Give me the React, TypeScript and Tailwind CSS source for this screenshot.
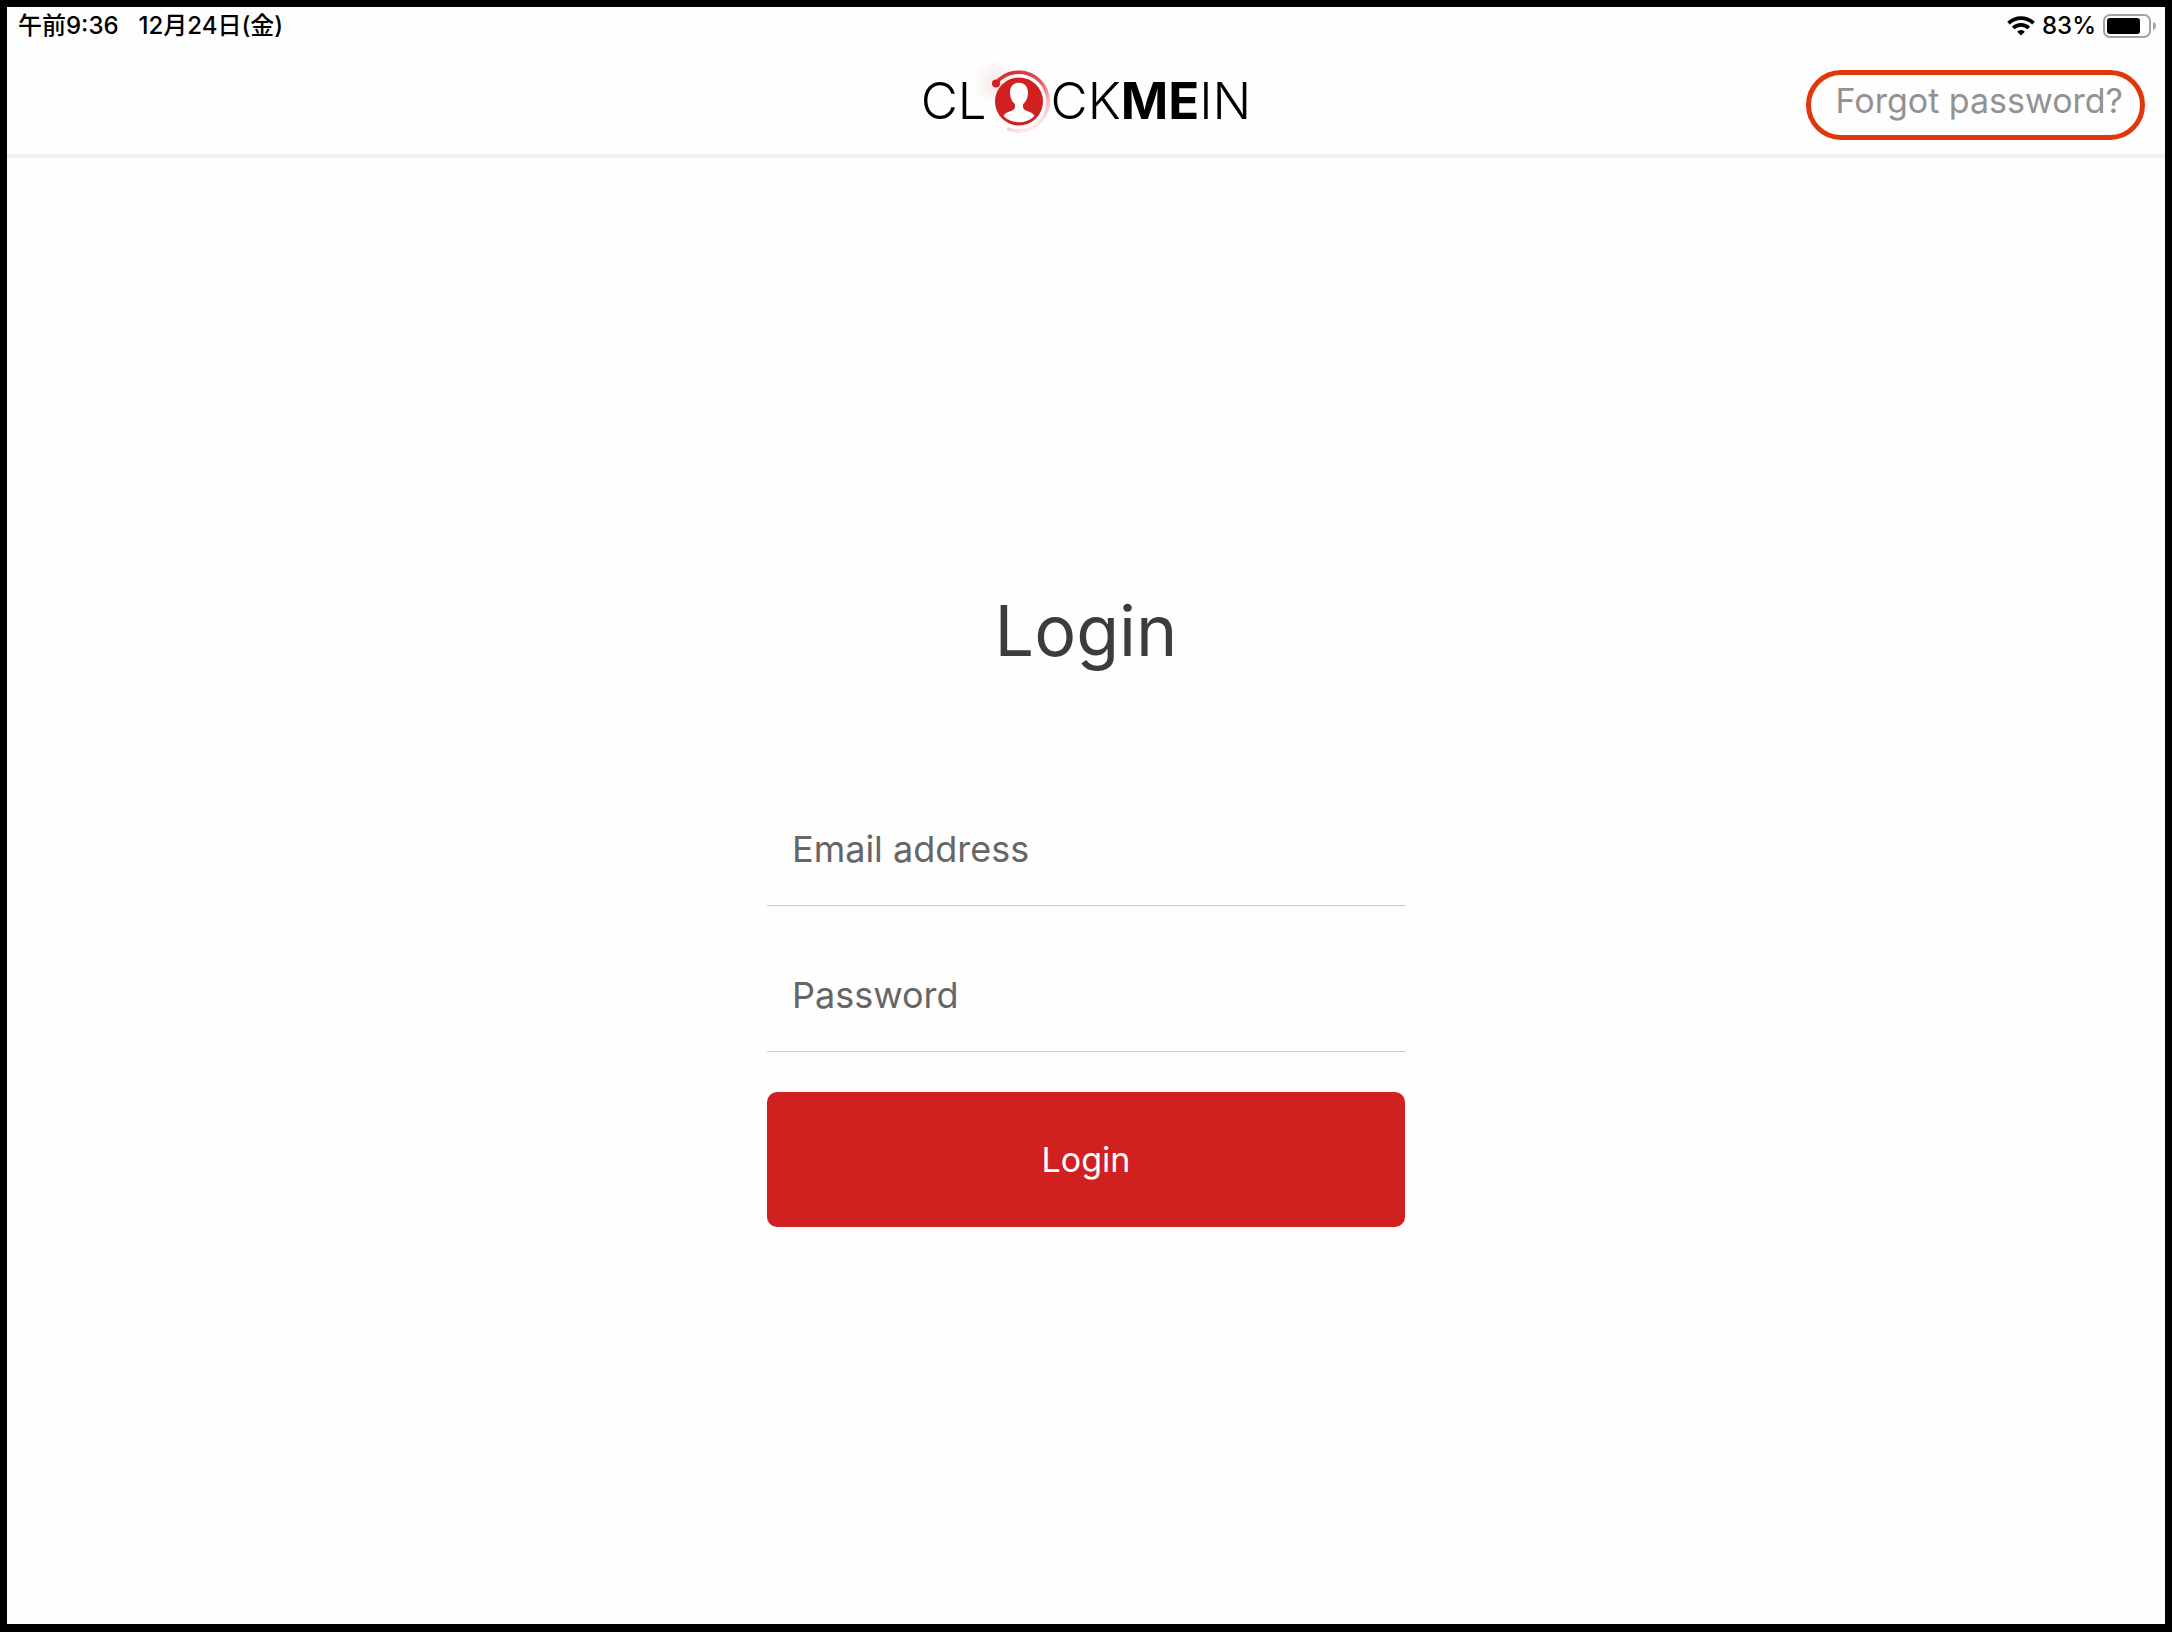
import { useState } from 'react';

const FONT = "font-['Inter','Noto_Sans_CJK_JP',sans-serif]";

function WifiIcon() {
  return (
    <svg width="28" height="20" viewBox="0 0 28 20" fill="none" aria-hidden="true">
      <path d="M1.5 7.2a18 18 0 0 1 25 0" stroke="#000" strokeWidth="3.8" />
      <path d="M6.2 12a11.2 11.2 0 0 1 15.600 0" stroke="#000" strokeWidth="3.8" />
      <path d="M14 19.6l-3.9-3.900a5.600 5.600 0 0 1 7.800 0z" fill="#000" />
    </svg>
  );
}

function BatteryIcon() {
  return (
    <svg width="54" height="24" viewBox="0 0 54 24" fill="none" aria-hidden="true">
      <rect x="1" y="1" width="46" height="22" rx="6" stroke="#a3a3a3" strokeWidth="2" />
      <rect x="4" y="4" width="33" height="16" rx="3" fill="#000" />
      <path d="M50 8c4 1 4 7 0 8z" fill="#a3a3a3" />
    </svg>
  );
}

// The "O" of the wordmark: a person inside a clock ring
function LogoMark() {
  return (
    <svg width="64" height="64" viewBox="0 0 64 64" fill="none" className="overflow-visible" aria-hidden="true">
      <defs>
        <radialGradient id="glow">
          <stop offset="0" stopColor="#d02020" stopOpacity="0.1" />
          <stop offset="1" stopColor="#d02020" stopOpacity="0" />
        </radialGradient>
        <linearGradient id="ring" x1="12" y1="6" x2="38" y2="62" gradientUnits="userSpaceOnUse">
          <stop offset="0" stopColor="#d32a2d" />
          <stop offset="0.35" stopColor="#e2575c" />
          <stop offset="0.7" stopColor="#f7b3b8" />
          <stop offset="1" stopColor="#fdeaec" />
        </linearGradient>
      </defs>
      <circle cx="9" cy="14" r="24" fill="url(#glow)" />
      <path d="M9 14A29.4 29.4 0 1 1 20 59.6" stroke="url(#ring)" strokeWidth="3.6" />
      <circle cx="9" cy="14.5" r="4" fill="#d02020" />
      <circle cx="32" cy="32.5" r="24" fill="#d02020" />
      <path
        d="M32 13.8c-5.6 0-9 4-9 9.7 0 4.9 1.9 9.2 4.8 11.5.8 4-.3 5.5-3.3 6.8-3.8 1.5-6.4 2.2-8 5.2 4.2 4.3 9.5 6.3 15.5 6.3s11.3-2 15.5-6.3c-1.6-3-4.2-3.7-8-5.2-3-1.3-4.1-2.8-3.3-6.8 2.9-2.3 4.8-6.6 4.8-11.5 0-5.7-3.4-9.7-9-9.7z"
        fill="#fff"
      />
    </svg>
  );
}

function Logo() {
  return (
    <div className="flex items-center text-[51px] leading-[64px] text-black" aria-label="ClockMeIn">
      <span className="font-light">CL</span>
      <LogoMark />
      <span className="font-light">CK</span>
      <span className="font-bold">ME</span>
      <span className="font-light">IN</span>
    </div>
  );
}

function StatusBar() {
  return (
    <div className="flex h-[38px] items-center justify-between pl-[11px] pr-2 text-[24px] font-medium leading-[38px] text-black">
      <div className="flex gap-5">
        <span>午前9:36</span>
        <span>12月24日(金)</span>
      </div>
      <div className="flex items-center gap-[7px]">
        <WifiIcon />
        <span>83%</span>
        <BatteryIcon />
      </div>
    </div>
  );
}

interface FieldProps {
  id: string;
  type: string;
  label: string;
  value: string;
  onChange: (value: string) => void;
}

function Field({ id, type, label, value, onChange }: FieldProps) {
  return (
    <input
      id={id}
      type={type}
      value={value}
      aria-label={label}
      placeholder={label}
      onChange={(e) => onChange(e.target.value)}
      className="block h-[114px] w-full border-b border-[#cccccc] bg-transparent px-[25px] text-[36px] text-[#3a3a3a] outline-none placeholder:text-[#666666]"
    />
  );
}

export default function App() {
  const [email, setEmail] = useState('');
  const [password, setPassword] = useState('');

  return (
    <div className={`flex min-h-screen flex-col border-[7px] border-b-8 border-black bg-[#fefefe] ${FONT}`}>
      <StatusBar />

      <header className="grid grid-cols-[1fr_auto_1fr] items-start border-b-4 border-[#f0f0f0] pb-[14px] pt-6">
        <div />
        <Logo />
        <a
          href="#forgot"
          className="mr-5 mt-px justify-self-end rounded-full border-[5px] border-[#e0370d] pb-[14px] pl-[25px] pr-[17px] pt-[6px] text-[34px] leading-10 text-[#929292]"
        >
          Forgot password?
        </a>
      </header>

      <main className="mx-auto w-full max-w-[638px] pt-[430px]">
        <h1 className="text-center text-[70px] leading-[86px] text-[#3c3c3c]">Login</h1>
        <form onSubmit={(e) => e.preventDefault()} className="pt-[118px]">
          <div className="flex flex-col gap-8">
            <Field id="email" type="email" label="Email address" value={email} onChange={setEmail} />
            <Field id="password" type="password" label="Password" value={password} onChange={setPassword} />
          </div>
          <button
            type="submit"
            className="mt-10 block h-[135px] w-full rounded-[10px] bg-[#d02020] text-[34px] text-white"
          >
            Login
          </button>
        </form>
      </main>
    </div>
  );
}
